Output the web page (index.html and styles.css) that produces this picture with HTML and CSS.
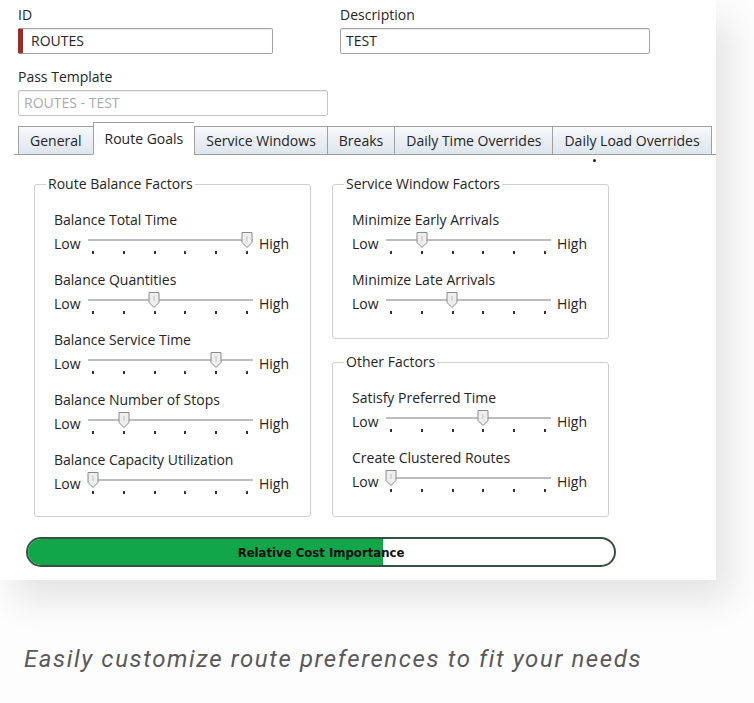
FILE: index.html
```html
<!DOCTYPE html>
<html lang="en">
<head>
  <meta charset="UTF-8" />
  <meta name="viewport" content="width=device-width, initial-scale=1.0"/>
  <title>Route Goals</title>
  <link rel="stylesheet" href="styles.css">
</head>
<body>
  <div class="card">
    <div class="fields">
      <div class="field field-id">
        <label>ID</label>
        <div class="input required">ROUTES</div>
      </div>
      <div class="field field-desc">
        <label>Description</label>
        <div class="input">TEST</div>
      </div>
    </div>
    <div class="field field-pass">
      <label>Pass Template</label>
      <div class="input disabled">ROUTES - TEST</div>
    </div>

    <div class="tabs">
      <div class="tab">General</div>
      <div class="tab active">Route Goals</div>
      <div class="tab">Service Windows</div>
      <div class="tab">Breaks</div>
      <div class="tab">Daily Time Overrides</div>
      <div class="tab">Daily Load Overrides</div>
    </div>

    <div class="panel">
      <span class="speck"></span>
      <div class="groups">
        <fieldset class="group">
          <legend>Route Balance Factors</legend>

          <div class="factor">
            <div class="factor-name">Balance Total Time</div>
            <div class="slider">
              <span class="end">Low</span>
              <div class="track">
                <div class="ticks"><i></i><i></i><i></i><i></i><i></i><i></i></div>
                <svg class="thumb" style="left: 153px" viewBox="0 0 12 18"><path d="M1 1.5 H11 V11.5 L6 16.5 L1 11.5 Z"/><line x1="6" y1="5" x2="6" y2="10"/></svg>
              </div>
              <span class="end high">High</span>
            </div>
          </div>

          <div class="factor">
            <div class="factor-name">Balance Quantities</div>
            <div class="slider">
              <span class="end">Low</span>
              <div class="track">
                <div class="ticks"><i></i><i></i><i></i><i></i><i></i><i></i></div>
                <svg class="thumb" style="left: 60px" viewBox="0 0 12 18"><path d="M1 1.5 H11 V11.5 L6 16.5 L1 11.5 Z"/><line x1="6" y1="5" x2="6" y2="10"/></svg>
              </div>
              <span class="end high">High</span>
            </div>
          </div>

          <div class="factor">
            <div class="factor-name">Balance Service Time</div>
            <div class="slider">
              <span class="end">Low</span>
              <div class="track">
                <div class="ticks"><i></i><i></i><i></i><i></i><i></i><i></i></div>
                <svg class="thumb" style="left: 122px" viewBox="0 0 12 18"><path d="M1 1.5 H11 V11.5 L6 16.5 L1 11.5 Z"/><line x1="6" y1="5" x2="6" y2="10"/></svg>
              </div>
              <span class="end high">High</span>
            </div>
          </div>

          <div class="factor">
            <div class="factor-name">Balance Number of Stops</div>
            <div class="slider">
              <span class="end">Low</span>
              <div class="track">
                <div class="ticks"><i></i><i></i><i></i><i></i><i></i><i></i></div>
                <svg class="thumb" style="left: 30px" viewBox="0 0 12 18"><path d="M1 1.5 H11 V11.5 L6 16.5 L1 11.5 Z"/><line x1="6" y1="5" x2="6" y2="10"/></svg>
              </div>
              <span class="end high">High</span>
            </div>
          </div>

          <div class="factor">
            <div class="factor-name">Balance Capacity Utilization</div>
            <div class="slider">
              <span class="end">Low</span>
              <div class="track">
                <div class="ticks"><i></i><i></i><i></i><i></i><i></i><i></i></div>
                <svg class="thumb" style="left: -1px" viewBox="0 0 12 18"><path d="M1 1.5 H11 V11.5 L6 16.5 L1 11.5 Z"/><line x1="6" y1="5" x2="6" y2="10"/></svg>
              </div>
              <span class="end high">High</span>
            </div>
          </div>
        </fieldset>

        <div class="col">
          <fieldset class="group">
            <legend>Service Window Factors</legend>

            <div class="factor">
              <div class="factor-name">Minimize Early Arrivals</div>
              <div class="slider">
                <span class="end">Low</span>
                <div class="track">
                  <div class="ticks"><i></i><i></i><i></i><i></i><i></i><i></i></div>
                  <svg class="thumb" style="left: 30px" viewBox="0 0 12 18"><path d="M1 1.5 H11 V11.5 L6 16.5 L1 11.5 Z"/><line x1="6" y1="5" x2="6" y2="10"/></svg>
                </div>
                <span class="end high">High</span>
              </div>
            </div>

            <div class="factor">
              <div class="factor-name">Minimize Late Arrivals</div>
              <div class="slider">
                <span class="end">Low</span>
                <div class="track">
                  <div class="ticks"><i></i><i></i><i></i><i></i><i></i><i></i></div>
                  <svg class="thumb" style="left: 60px" viewBox="0 0 12 18"><path d="M1 1.5 H11 V11.5 L6 16.5 L1 11.5 Z"/><line x1="6" y1="5" x2="6" y2="10"/></svg>
                </div>
                <span class="end high">High</span>
              </div>
            </div>
          </fieldset>

          <fieldset class="group">
            <legend>Other Factors</legend>

            <div class="factor">
              <div class="factor-name">Satisfy Preferred Time</div>
              <div class="slider">
                <span class="end">Low</span>
                <div class="track">
                  <div class="ticks"><i></i><i></i><i></i><i></i><i></i><i></i></div>
                  <svg class="thumb" style="left: 91px" viewBox="0 0 12 18"><path d="M1 1.5 H11 V11.5 L6 16.5 L1 11.5 Z"/><line x1="6" y1="5" x2="6" y2="10"/></svg>
                </div>
                <span class="end high">High</span>
              </div>
            </div>

            <div class="factor">
              <div class="factor-name">Create Clustered Routes</div>
              <div class="slider">
                <span class="end">Low</span>
                <div class="track">
                  <div class="ticks"><i></i><i></i><i></i><i></i><i></i><i></i></div>
                  <svg class="thumb" style="left: -1px" viewBox="0 0 12 18"><path d="M1 1.5 H11 V11.5 L6 16.5 L1 11.5 Z"/><line x1="6" y1="5" x2="6" y2="10"/></svg>
                </div>
                <span class="end high">High</span>
              </div>
            </div>
          </fieldset>
        </div>
      </div>

      <div class="cost-bar">
        <div class="cost-fill" style="width: 60.5%"></div>
        <span class="cost-label">Relative Cost Importance</span>
      </div>
    </div>
  </div>

  <p class="caption">Easily customize route preferences to fit your needs</p>
</body>
</html>
```

FILE: styles.css
```css
:root {
  --color-border: #a3a3a3;
  --color-group: #cfcfcf;
  --color-text: #252525;
  --color-green: #12a64b;
}

body {
  margin: 0;
  padding: 0;
  background: #fdfdfd;
  font-family: 'Open Sans', 'Noto Sans', sans-serif;
  font-size: 14px;
  color: var(--color-text);
}

.card {
  width: 698px;
  height: 574px;
  padding: 6px 0 0 18px;
  background: #fff;
  box-shadow: 14px 20px 34px rgba(0, 0, 0, 0.10);
}

/* top fields */
.fields {
  display: flex;
}

.field label {
  display: block;
  height: 18px;
  line-height: 18px;
  margin-bottom: 4px;
}

.field-id {
  width: 322px;
}

.field-id .input {
  width: 255px;
}

.field-desc .input {
  width: 310px;
}

.field-pass {
  margin-top: 14px;
}

.field-pass .input {
  width: 310px;
}

.input {
  box-sizing: border-box;
  height: 26px;
  line-height: 24px;
  padding-left: 5px;
  border: 1px solid var(--color-border);
  border-radius: 2px;
  box-shadow: inset 0 1px 1px rgba(0, 0, 0, 0.08);
  background: #fff;
}

.input.required {
  border-left: 5px solid #9b2a2a;
  padding-left: 8px;
}

.input.disabled {
  color: #ababab;
  border-color: #c4c4c4;
}

/* tabs */
.tabs {
  display: flex;
  align-items: flex-end;
  margin: 6px 0 0 -4px;
  padding-left: 4px;
  border-bottom: 1px solid #9b9b9b;
}

.tab {
  box-sizing: border-box;
  height: 29px;
  line-height: 27px;
  padding: 0 11px;
  margin-bottom: -1px;
  border: 1px solid #a0a0a0;
  border-right: none;
  background: linear-gradient(to bottom, #f7f9fb, #dde5ed);
  white-space: nowrap;
}

.tab:last-child {
  border-right: 1px solid #a0a0a0;
}

.tab.active {
  height: 33px;
  line-height: 31px;
  background: #fff;
  border-bottom: 1px solid #fff;
}

.tab.active + .tab {
  border-left: 1px solid #a0a0a0;
}

/* panel */
.panel {
  position: relative;
  padding: 20px 0 0 16px;
}

.speck {
  position: absolute;
  left: 575px;
  top: 4px;
  width: 3px;
  height: 3px;
  border-radius: 50%;
  background: #222;
}

.groups {
  display: flex;
  gap: 21px;
  align-items: flex-start;
}

.col {
  display: flex;
  flex-direction: column;
  gap: 14px;
}

.group {
  box-sizing: border-box;
  width: 277px;
  margin: 0;
  padding: 18px 10px 20px 19px;
  border: 1px solid var(--color-group);
  border-radius: 3px;
}

.col .group {
  padding-bottom: 22px;
}

.group legend {
  height: 18px;
  line-height: 18px;
  padding: 0 2px;
  margin-left: -8px;
}

.factor + .factor {
  margin-top: 15px;
}

.factor-name {
  height: 18px;
  line-height: 18px;
  margin-bottom: 1px;
  white-space: nowrap;
}

.slider {
  display: flex;
  align-items: center;
  height: 26px;
}

.end {
  width: 34px;
}

.end.high {
  width: auto;
  margin-left: 6px;
}

.track {
  position: relative;
  width: 165px;
  height: 26px;
}

.track::before {
  content: "";
  position: absolute;
  left: 0;
  right: 0;
  top: 9px;
  height: 2px;
  background: #bdbdbd;
}

.ticks {
  display: flex;
  justify-content: space-between;
  padding: 21px 5px 0 4px;
}

.ticks i {
  width: 2px;
  height: 3px;
  background: #333;
}

.thumb {
  position: absolute;
  top: 1px;
  width: 12px;
  height: 18px;
}

.thumb path {
  fill: #eeeeee;
  stroke: #8a8a8a;
  stroke-width: 1;
}

.thumb line {
  stroke: #c0c0c0;
  stroke-width: 1;
}

/* cost bar */
.cost-bar {
  position: relative;
  box-sizing: border-box;
  width: 590px;
  height: 30px;
  margin: 20px 0 0 -8px;
  border: 2px solid #36523d;
  border-radius: 15px;
  overflow: hidden;
  background: #fff;
  display: flex;
  align-items: center;
  justify-content: center;
}

.cost-fill {
  position: absolute;
  left: 0;
  top: 0;
  bottom: 0;
  background: var(--color-green);
}

.cost-label {
  position: relative;
  font-family: 'Liberation Sans Narrow', 'DejaVu Sans Condensed', 'Liberation Sans', sans-serif;
  font-weight: bold;
  font-size: 13px;
  color: #111;
}

/* caption */
.caption {
  margin: 65px 0 0 24px;
  font-family: Roboto, 'Liberation Sans', sans-serif;
  font-style: italic;
  font-size: 24px;
  letter-spacing: 1.6px;
  color: #595959;
}
```
